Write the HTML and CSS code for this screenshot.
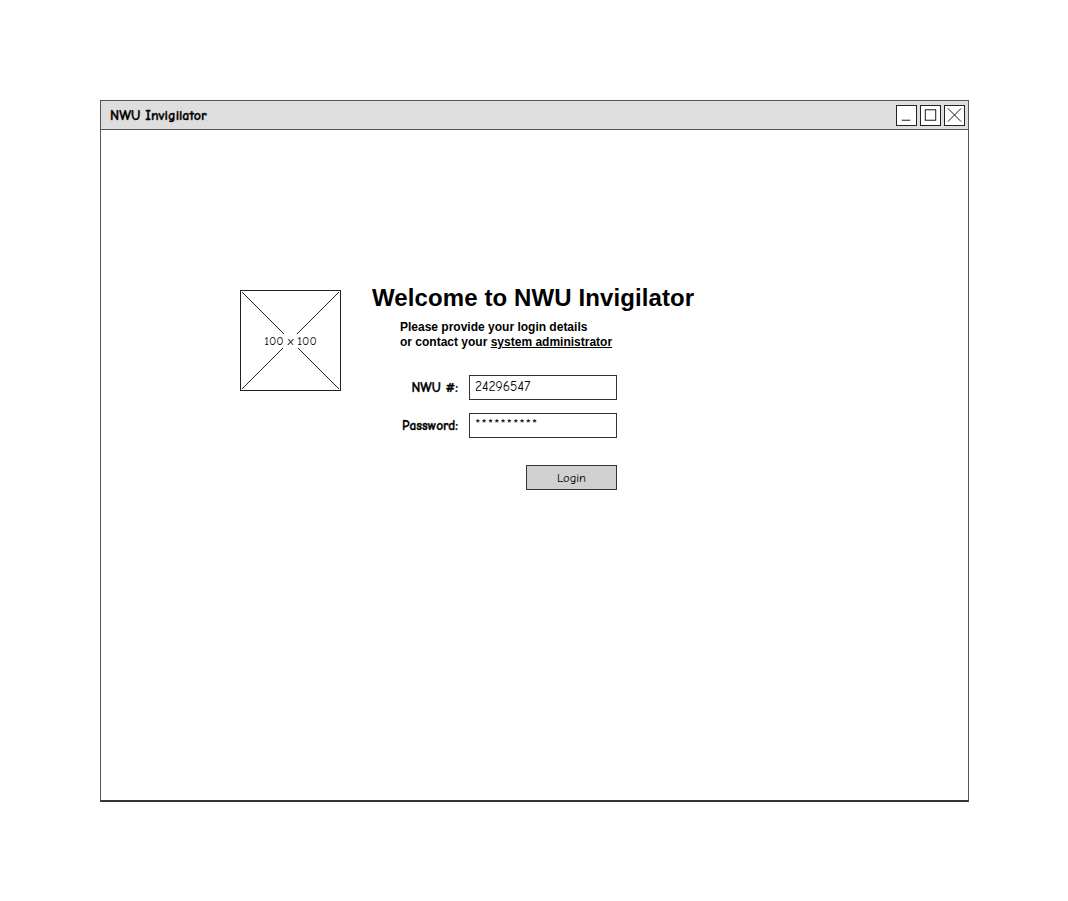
FILE: index.html
```html
<!DOCTYPE html>
<html>
<head>
<meta charset="utf-8">
<title>NWU Invigilator</title>
<link rel="stylesheet" href="styles.css">
</head>
<body>
<div class="window">
  <div class="titlebar">
    <span class="title">NWU Invigilator</span>
    <div class="controls">
      <span class="ctl"><svg width="20" height="20" viewBox="0 0 20 20"><path d="M5 15.5 H14" stroke="#111" stroke-width="1" fill="none"/></svg></span>
      <span class="ctl"><svg width="20" height="20" viewBox="0 0 20 20"><rect x="4.5" y="4.5" width="11" height="11" stroke="#111" stroke-width="1" fill="none"/></svg></span>
      <span class="ctl"><svg width="20" height="20" viewBox="0 0 20 20"><path d="M3 3 L17 17 M17 3 L3 17" stroke="#111" stroke-width="1" fill="none"/></svg></span>
    </div>
  </div>
  <div class="content">
    <div class="placeholder">
      <svg class="cross" width="101" height="100" viewBox="0 0 101 100" preserveAspectRatio="none"><path d="M1 1 L100 99 M100 1 L1 99" stroke="#222" stroke-width="1" fill="none"/></svg>
      <span class="ph-label">100 x 100</span>
    </div>
    <div class="form">
      <h1 class="heading">Welcome to NWU Invigilator</h1>
      <p class="sub">Please provide your login details<br>or contact your <a class="link" href="#">system administrator</a></p>
      <div class="fields">
        <label class="lbl">NWU #:</label>
        <div class="input">24296547</div>
        <label class="lbl">Password:</label>
        <div class="input pw">**********</div>
        <button class="btn">Login</button>
      </div>
    </div>
  </div>
</div>
</body>
</html>
```
FILE: styles.css
```css
* { box-sizing: border-box; }
html, body { margin: 0; padding: 0; background: #fff; }
body { font-family: "Liberation Sans", Arial, sans-serif; color: #000; }

.window {
  margin: 100px 0 0 100px;
  width: 869px;
  height: 702px;
  border: 1px solid #555;
  border-bottom: 2px solid #333;
  display: flex;
  flex-direction: column;
}

.titlebar {
  height: 29px;
  background: #dedede;
  border-bottom: 1px solid #555;
  display: flex;
  align-items: center;
  justify-content: space-between;
  padding: 0 3px 0 9px;
}
.title {
  font-family: "Comic Sans MS", "Comic Neue", "DejaVu Sans", sans-serif;
  font-weight: bold;
  font-size: 14px;
  letter-spacing: 0;
  -webkit-text-stroke: 0.3px #000;
}
.controls { display: flex; gap: 3px; }
.ctl {
  width: 21px;
  height: 21px;
  border: 1px solid #222;
  background: #fff;
  display: flex;
  align-items: center;
  justify-content: center;
}
.ctl svg { display: block; }

.content {
  flex: 1;
  display: flex;
  align-items: flex-start;
  padding: 154px 0 0 139px;
}

.placeholder {
  position: relative;
  width: 101px;
  height: 101px;
  margin-top: 6px;
  border: 1px solid #222;
  display: flex;
  align-items: center;
  justify-content: center;
}
.cross { position: absolute; left: 0; top: 0; width: 100%; height: 100%; }
.ph-label {
  position: relative;
  background: #fff;
  padding: 0 1px;
  font-family: "Comic Sans MS", "Comic Neue", "DejaVu Sans", sans-serif;
  font-size: 12px;
  line-height: 14px;
}

.form { margin-left: 31px; display: flex; flex-direction: column; }
.heading {
  margin: 0;
  font-size: 24px;
  line-height: 28px;
  font-weight: bold;
  white-space: nowrap;
  letter-spacing: 0.1px;
}
.sub {
  margin: 8px 0 0 28px;
  font-size: 12px;
  line-height: 15px;
  font-weight: bold;
}
.link { color: #000; text-decoration: underline; }

.fields {
  margin: 25px 0 0 22px;
  display: grid;
  grid-template-columns: 64px 148px;
  column-gap: 11px;
  row-gap: 13px;
  align-items: center;
}
.lbl {
  text-align: right;
  font-family: "Comic Sans MS", "Comic Neue", "DejaVu Sans", sans-serif;
  font-weight: bold;
  font-size: 13.5px;
  -webkit-text-stroke: 0.3px #000;
  white-space: nowrap;
}
.input {
  height: 25px;
  border: 1px solid #333;
  background: #fff;
  padding: 0 5px;
  font-family: "Comic Sans MS", "Comic Neue", "DejaVu Sans", sans-serif;
  font-size: 13.5px;
  line-height: 21px;
}
.pw { font-size: 14px; letter-spacing: 0.8px; }

.btn {
  grid-column: 2;
  justify-self: end;
  margin-top: 14px;
  width: 91px;
  height: 25px;
  border: 1px solid #333;
  background: #d0d0d0;
  font-family: "Comic Sans MS", "Comic Neue", "DejaVu Sans", sans-serif;
  font-size: 12.5px;
  color: #000;
  padding: 0;
}
```
